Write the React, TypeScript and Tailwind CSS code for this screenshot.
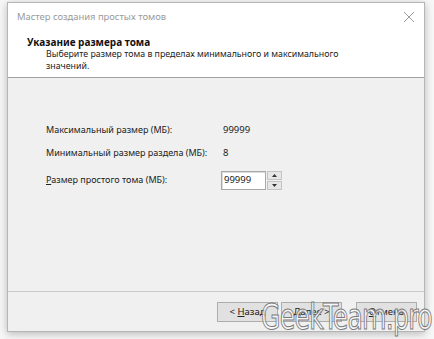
import React from 'react';

const font = { fontFamily: '"Noto Sans", "Open Sans", sans-serif' };

function Button({ u, rest, pre }: { u: string; rest: string; pre?: string }) {
  return (
    <button className="h-[20px] w-[61px] border border-[#adadad] bg-[#e1e1e1] text-[9.5px] leading-none text-[#222]">
      {pre}
      <span className="underline">{u}</span>
      {rest}
    </button>
  );
}

export default function App() {
  return (
    <div className="relative h-[339px] w-[434px] overflow-hidden bg-[#f7f7f7]" style={font}>
      <div className="ml-[7px] mt-[2px] flex h-[330px] w-[418px] flex-col border border-[#b5b5b5] bg-white shadow-[0_2px_8px_rgba(0,0,0,0.25)]">
        {/* title bar */}
        <div className="flex h-[28px] items-center justify-between pl-[9px] pr-[8px]">
          <span className="text-[9.4px] text-[#9a9a9a]">Мастер создания простых томов</span>
          <svg width="12" height="12" viewBox="0 0 12 12" className="mr-[1px]">
            <path d="M1 1L11 11M11 1L1 11" stroke="#9a9a9a" strokeWidth="1" />
          </svg>
        </div>
        {/* header */}
        <div className="h-[47px] border-b border-[#a0a0a0] pl-[19px] pt-[4px]">
          <div className="text-[10px] font-bold leading-[14px] text-[#111]">Указание размера тома</div>
          <div className="pl-[19px] text-[8.8px] leading-[11.5px] text-[#222]">
            Выберите размер тома в пределах минимального и максимального
            <br />
            значений.
          </div>
        </div>
        {/* body */}
        <div className="flex-1 bg-[#f0f0f0] pl-[38px] pt-[45px] text-[9px] text-[#222]">
          <div className="flex h-[14px] items-center">
            <span className="w-[177px]">Максимальный размер (МБ):</span>
            <span className="text-[9.5px]">99999</span>
          </div>
          <div className="mt-[9px] flex h-[14px] items-center">
            <span className="w-[177px]">Минимальный размер раздела (МБ):</span>
            <span className="text-[9.5px]">8</span>
          </div>
          <div className="mt-[10px] flex items-center">
            <span className="w-[175px]">
              <span className="underline">Р</span>азмер простого тома (МБ):
            </span>
            <div className="flex h-[20px] items-center">
              <div className="flex h-[19px] w-[45px] items-center border border-[#a8a8a8] bg-white pl-[2px] text-[9.5px] shadow-[inset_1px_1px_0_#ddd]">
                99999
              </div>
              <div className="ml-[1px] flex h-[19px] w-[15px] flex-col gap-[1px]">
                <div className="flex flex-1 items-center justify-center border border-[#c4c4c4] bg-[#e6e6e6]">
                  <svg width="5" height="3" viewBox="0 0 5 3"><path d="M0 3L2.5 0L5 3Z" fill="#333" /></svg>
                </div>
                <div className="flex flex-1 items-center justify-center border border-[#c4c4c4] bg-[#e6e6e6]">
                  <svg width="5" height="3" viewBox="0 0 5 3"><path d="M0 0L2.5 3L5 0Z" fill="#333" /></svg>
                </div>
              </div>
            </div>
          </div>
        </div>
        {/* footer */}
        <div className="flex h-[40px] items-center justify-end gap-[3px] border-t border-[#c8c8c8] bg-[#f0f0f0] pr-[7px]">
          <Button pre="< " u="Н" rest="азад" />
          <Button u="Д" rest="алее >" />
          <div className="w-[8px]" />
          <Button u="О" rest="тмена" />
        </div>
      </div>
      {/* watermark */}
      <div
        className="absolute left-[261px] top-[297px] origin-left scale-x-[0.8] text-[35px] leading-[40px] tracking-[-1px] text-white/75 [-webkit-text-stroke:1px_#7a7a7a]"
        style={{ fontFamily: '"Liberation Sans Narrow", "DejaVu Sans Condensed", sans-serif' }}
      >
        GeekTeam.pro
      </div>
    </div>
  );
}
